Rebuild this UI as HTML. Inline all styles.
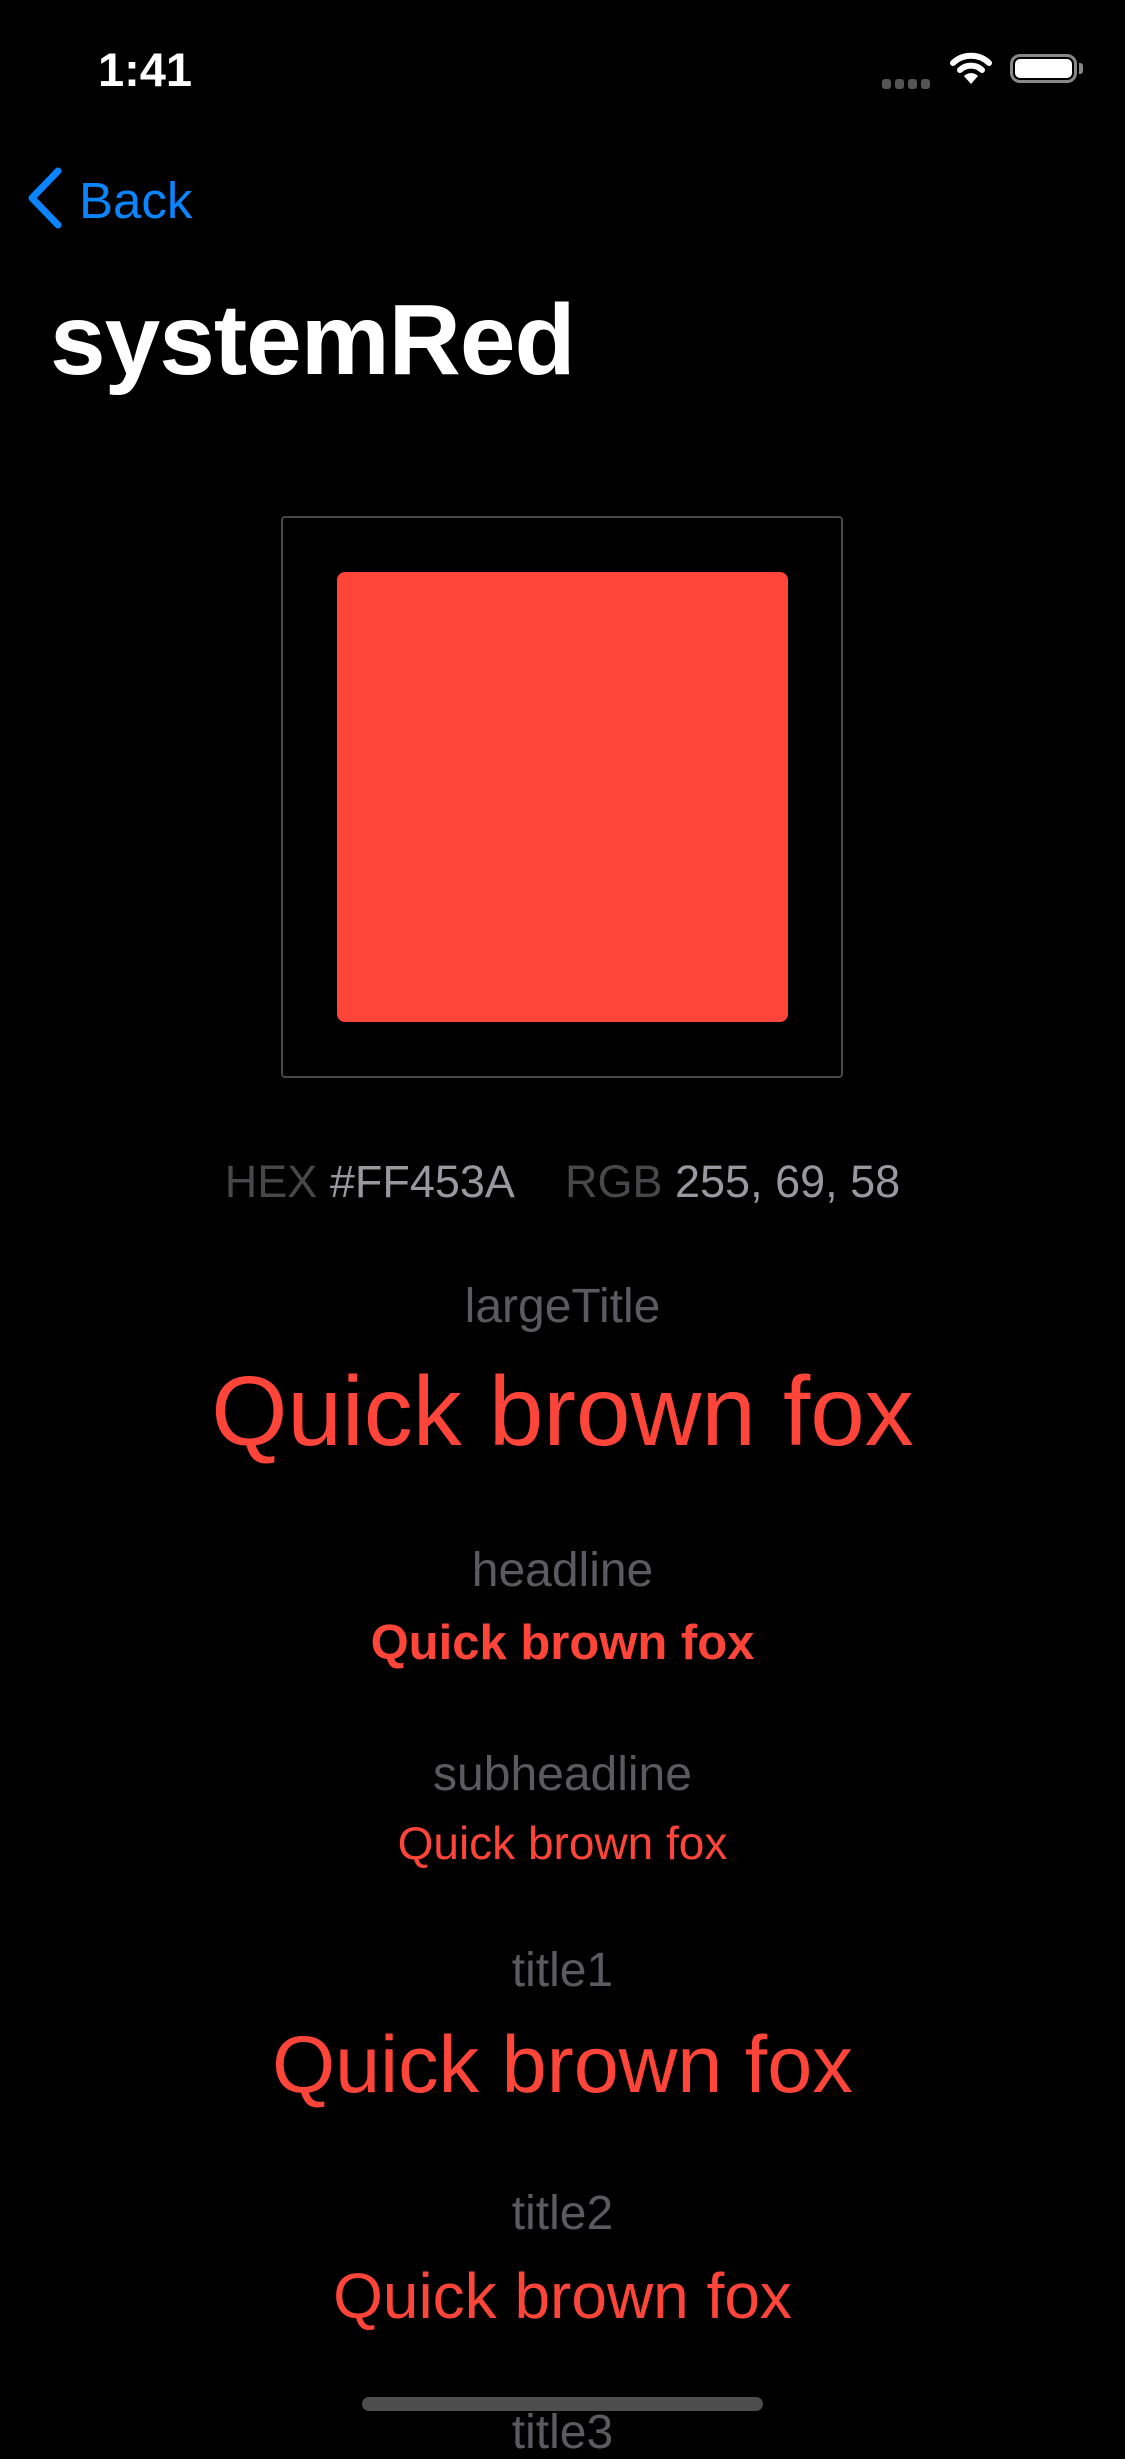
<!DOCTYPE html>
<html><head><meta charset="utf-8"><style>
html,body{margin:0;padding:0;background:#000;}
body{width:1125px;height:2436px;position:relative;overflow:hidden;font-family:"Liberation Sans",sans-serif;}
.t{position:absolute;left:0;width:1125px;text-align:center;line-height:1;white-space:nowrap;}
.lab{font-size:48px;color:#5b5b5f;}
.red{color:#FF453A;}
</style></head><body>
<div style="position:absolute;left:98px;top:46px;font-size:47px;font-weight:bold;color:#fff;line-height:1;">1:41</div>
<div style="position:absolute;left:882px;top:76px;">
<span style="display:inline-block;width:9px;height:10px;background:#555;border-radius:3px;margin-right:4px"></span><span style="display:inline-block;width:9px;height:10px;background:#555;border-radius:3px;margin-right:4px"></span><span style="display:inline-block;width:9px;height:10px;background:#555;border-radius:3px;margin-right:4px"></span><span style="display:inline-block;width:9px;height:10px;background:#555;border-radius:3px;"></span></div>
<svg style="position:absolute;left:949px;top:50px" width="44" height="36" viewBox="0 0 44 36">
<path d="M4 13 A26 26 0 0 1 40 13" stroke="#fff" stroke-width="6" fill="none" stroke-linecap="round"/>
<path d="M11 20 A16 16 0 0 1 33 20" stroke="#fff" stroke-width="6" fill="none" stroke-linecap="round"/>
<path d="M15 26 L22 34 L29 26 A10 10 0 0 0 15 26Z" fill="#fff"/>
</svg>
<div style="position:absolute;left:1010px;top:54px;width:67px;height:29px;border:3px solid #888;border-radius:10px;box-sizing:border-box;"></div>
<div style="position:absolute;left:1015px;top:59px;width:57px;height:19px;background:#fff;border-radius:5px;"></div>
<div style="position:absolute;left:1079px;top:63px;width:4px;height:11px;background:#888;border-radius:0 3px 3px 0;"></div>
<svg style="position:absolute;left:22px;top:165px" width="44" height="66" viewBox="0 0 44 66"><path d="M36 6 L10 33 L36 60" stroke="#0A84FF" stroke-width="7" fill="none" stroke-linecap="round" stroke-linejoin="round"/></svg>
<div style="position:absolute;left:79px;top:175px;font-size:51px;color:#0A84FF;line-height:1;">Back</div>
<div style="position:absolute;left:50px;top:290px;font-size:100px;font-weight:bold;color:#fff;line-height:1;letter-spacing:-1px;">systemRed</div>
<div style="position:absolute;left:281px;top:516px;width:562px;height:562px;border:2px solid #48484a;border-radius:4px;box-sizing:border-box;"></div>
<div style="position:absolute;left:337px;top:572px;width:451px;height:450px;background:#FF453A;border-radius:8px;"></div>
<div class="t" style="top:1159px;font-size:45px;"><span style="color:#48484a">HEX</span> <span style="color:#98989e">#FF453A</span>&nbsp;&nbsp;&nbsp;&nbsp;<span style="color:#48484a">RGB</span> <span style="color:#98989e">255, 69, 58</span></div>
<div class="t lab" style="top:1283px;">largeTitle</div>
<div class="t red" style="top:1362px;font-size:98px;">Quick brown fox</div>
<div class="t lab" style="top:1547px;">headline</div>
<div class="t red" style="top:1619px;font-size:49px;font-weight:bold;">Quick brown fox</div>
<div class="t lab" style="top:1751px;">subheadline</div>
<div class="t red" style="top:1820px;font-size:46px;">Quick brown fox</div>
<div class="t lab" style="top:1947px;">title1</div>
<div class="t red" style="top:2025px;font-size:81px;">Quick brown fox</div>
<div class="t lab" style="top:2190px;">title2</div>
<div class="t red" style="top:2264px;font-size:64px;">Quick brown fox</div>
<div class="t lab" style="top:2409px;">title3</div>
<div style="position:absolute;left:362px;top:2397px;width:401px;height:14px;background:#4d4d4d;border-radius:7px;"></div>
</body></html>
